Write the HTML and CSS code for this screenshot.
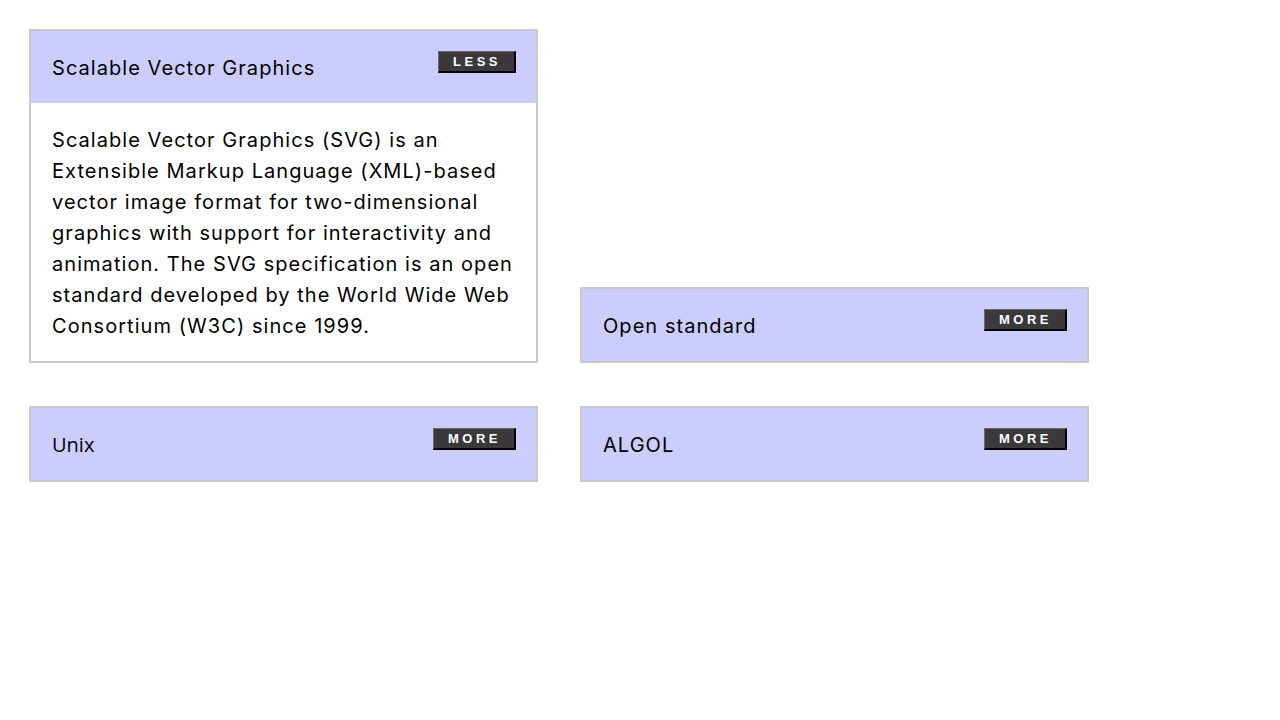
FILE: index.html
```html
<!DOCTYPE html>
<html lang="en">
<head>
<meta charset="utf-8">
<title>Accordion cards</title>
<link rel="stylesheet" href="styles.css">
</head>
<body>
<main class="grid">
  <section class="card">
    <header class="card-head">
      <h2 class="card-title">Scalable Vector Graphics</h2>
      <button class="toggle" type="button">LESS</button>
    </header>
    <div class="card-body">
      <p>Scalable Vector Graphics (SVG) is an Extensible Markup Language (XML)-based vector image format for two-dimensional graphics with support for interactivity and animation. The SVG specification is an open standard developed by the World Wide Web Consortium (W3C) since 1999.</p>
    </div>
  </section>
  <section class="card">
    <header class="card-head">
      <h2 class="card-title">Open standard</h2>
      <button class="toggle" type="button">MORE</button>
    </header>
  </section>
  <section class="card">
    <header class="card-head">
      <h2 class="card-title alt">Unix</h2>
      <button class="toggle" type="button">MORE</button>
    </header>
  </section>
  <section class="card">
    <header class="card-head">
      <h2 class="card-title">ALGOL</h2>
      <button class="toggle" type="button">MORE</button>
    </header>
  </section>
</main>
</body>
</html>
```

FILE: styles.css
```css
html, body {
  margin: 0;
  padding: 0;
  background: #ffffff;
}

body {
  font-family: "Inter", "Open Sans", sans-serif;
  color: #000000;
}

.grid {
  display: grid;
  grid-template-columns: 509px 509px;
  column-gap: 42px;
  row-gap: 43px;
  align-items: end;
  padding: 29px 0 0 29px;
}

.card {
  border: 2px solid #cbc7cb;
  background: #ffffff;
}

.card-head {
  display: flex;
  justify-content: space-between;
  align-items: flex-start;
  background: #ccccff;
  padding: 20px 20px 20px 21px;
}

.card-title {
  margin: 0;
  padding-top: 2px;
  font-size: 20px;
  font-weight: 400;
  line-height: 30px;
  letter-spacing: 1.05px;
}

.card-title.alt {
  font-family: "Open Sans", sans-serif;
  letter-spacing: 0;
}

.toggle {
  font-family: "Liberation Sans", Arial, sans-serif;
  font-weight: 700;
  font-size: 13px;
  letter-spacing: 3.5px;
  color: #ffffff;
  background: #3b3939;
  border-style: solid;
  border-width: 1px 2px 2px 1px;
  border-color: #6a6868 #000000 #000000 #6a6868;
  padding: 2px 13px 2px 14px;
  height: 22px;
  line-height: 16px;
  cursor: pointer;
}

.card-body {
  padding: 22px 20px 19px 21px;
}

.card-body p {
  margin: 0;
  font-size: 20px;
  line-height: 31px;
  letter-spacing: 1.05px;
}
```
